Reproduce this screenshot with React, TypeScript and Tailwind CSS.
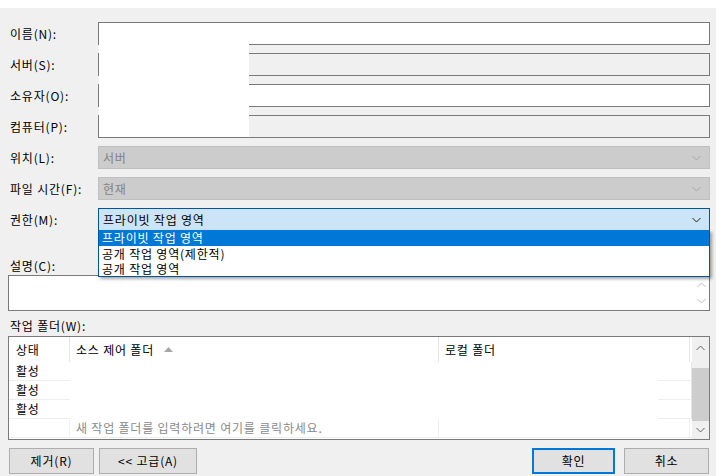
import React from "react";

const font = "font-['Noto_Sans_CJK_KR','Liberation_Sans',sans-serif] tracking-[0.8px]";

function Chevron({ color = "#333", up = false }: { color?: string; up?: boolean }) {
  return (
    <svg width="9" height="6" viewBox="0 0 9 6" className="shrink-0">
      <polyline
        points={up ? "0.5,5 4.5,1 8.5,5" : "0.5,1 4.5,5 8.5,1"}
        fill="none"
        stroke={color}
        strokeWidth="1"
      />
    </svg>
  );
}

function Row({ label, children }: { label: string; children: React.ReactNode }) {
  return (
    <div className="flex items-center h-[23px]">
      <div className="w-[98px] pl-[10px] text-[12px] text-black">{label}</div>
      {children}
    </div>
  );
}

function TextBox({ white }: { white?: boolean }) {
  return (
    <div
      className={
        "w-[612px] h-[23px] border border-[#7a7a7a] " + (white ? "bg-white" : "bg-[#f0f0f0]")
      }
    />
  );
}

function DisabledSelect({ value }: { value: string }) {
  return (
    <div className="w-[612px] h-[23px] border border-[#bfbfbf] bg-[#cccccc] flex items-center justify-between pl-[4px] pr-[8px]">
      <span className="text-[12px] text-[#838383]">{value}</span>
      <Chevron color="#a8a8a8" />
    </div>
  );
}

const folders = ["활성", "활성", "활성"];

export default function App() {
  return (
    <div className={"relative w-[716px] h-[476px] bg-[#f0f0f0] overflow-hidden " + font}>
      <div className="h-[8px] bg-white" />

      <div className="flex flex-col gap-[8px] pt-[14px]">
        <Row label="이름(N):">
          <TextBox white />
        </Row>
        <Row label="서버(S):">
          <TextBox />
        </Row>
        <Row label="소유자(O):">
          <TextBox white />
        </Row>
        <Row label="컴퓨터(P):">
          <TextBox />
        </Row>
        <Row label="위치(L):">
          <DisabledSelect value="서버" />
        </Row>
        <Row label="파일 시간(F):">
          <DisabledSelect value="현재" />
        </Row>
        <Row label="권한(M):">
          <div className="w-[612px] h-[23px] border border-[#005499] bg-[#cce4f7] flex items-center justify-between pl-[4px] pr-[8px]">
            <span className="text-[12px] text-black">프라이빗 작업 영역</span>
            <Chevron color="#222" />
          </div>
        </Row>
      </div>

      <div className="mt-[26px] h-[18px] ml-[10px] w-fit text-[12px] leading-[18px]">설명(C):</div>
      <div className="ml-[8px] w-[702px] h-[36px] border border-[#7a7a7a] bg-white flex justify-end">
        <div className="w-[16px] flex flex-col items-center justify-between py-[6px]">
          <Chevron color="#bdbdbd" up />
          <Chevron color="#bdbdbd" />
        </div>
      </div>

      <div className="mt-[6px] h-[18px] ml-[10px] w-fit text-[12px] leading-[18px]">작업 폴더(W):</div>
      <div className="mt-px ml-[8px] w-[702px] h-[104px] border border-[#7a7a7a] bg-white flex">
        <div className="flex-1 flex flex-col text-[12px]">
          <div className="flex h-[25px] items-center">
            <div className="w-[61px] h-full flex items-center pl-[7px] border-r border-[#e5e5e5]">상태</div>
            <div className="w-[368px] h-full flex items-center pl-[6px] gap-[10px]">
              <span>소스 제어 폴더</span>
              <svg width="9" height="5" viewBox="0 0 9 5">
                <polygon points="0,5 4.5,0 9,5" fill="#a6a6a6" />
              </svg>
            </div>
            <div className="w-[252px] h-full flex items-center pl-[6px] border-l border-[#e5e5e5] border-r">
              로컬 폴더
            </div>
          </div>
          {folders.map((s, i) => (
            <div key={i} className="flex h-[19px] items-center">
              <div className="w-[61px] h-full flex items-center pl-[7px] border-b border-[#eeeeee]">{s}</div>
              <div className="flex-1 h-full" />
              <div className="w-[34px] h-full border-b border-[#eeeeee] border-r border-r-[#e5e5e5]" />
            </div>
          ))}
          <div className="flex h-[19px] items-center border-b border-[#eeeeee]">
            <div className="w-[61px] h-full border-r border-[#f3f3f3]" />
            <div className="w-[368px] pl-[6px] text-[#8a8a8a]">새 작업 폴더를 입력하려면 여기를 클릭하세요.</div>
            <div className="w-[252px] h-full border-l border-r border-[#eeeeee]" />
          </div>
        </div>
        <div className="w-[17px] bg-[#f0f0f0] flex flex-col items-center">
          <div className="h-[22px] flex items-center">
            <Chevron color="#606060" up />
          </div>
          <div className="mt-[9px] w-[17px] h-[53px] bg-[#cdcdcd]" />
          <div className="flex-1 flex items-center">
            <Chevron color="#606060" />
          </div>
        </div>
      </div>

      <div className="mt-[8px] flex items-center text-[12px]">
        <div className="ml-[9px] w-[85px] h-[26px] border border-[#adadad] bg-[#e1e1e1] flex items-center justify-center">
          제거(R)
        </div>
        <div className="ml-[5px] w-[98px] h-[26px] border border-[#adadad] bg-[#e1e1e1] flex items-center justify-center">
          {"<< 고급(A)"}
        </div>
        <div className="ml-[335px] w-[83px] h-[26px] border-2 border-[#0078d7] bg-[#e1e1e1] flex items-center justify-center">
          확인
        </div>
        <div className="ml-[9px] w-[85px] h-[26px] border border-[#adadad] bg-[#e1e1e1] flex items-center justify-center">
          취소
        </div>
      </div>

      {/* open dropdown list */}
      <div className="absolute left-[98px] top-[230px] w-[612px] h-[47px] border border-[#005499] border-t-0 bg-white shadow-[2px_2px_3px_rgba(0,0,0,0.35)] text-[12px]">
        <div className="h-[16px] bg-[#0078d7] text-white pl-[3px] flex items-center leading-[14px]">프라이빗 작업 영역</div>
        <div className="h-[15px] pl-[3px] flex items-center leading-[14px]">공개 작업 영역(제한적)</div>
        <div className="h-[15px] pl-[3px] flex items-center leading-[14px]">공개 작업 영역</div>
      </div>

      {/* redacted block */}
      <div className="absolute left-[99px] top-[23px] w-[150px] h-[114px] bg-white" />
    </div>
  );
}
